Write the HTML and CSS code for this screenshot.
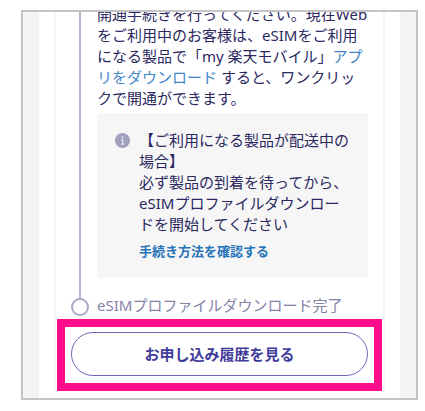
FILE: index.html
```html
<!DOCTYPE html>
<html lang="ja">
<head>
    <meta charset="UTF-8">
    <meta name="viewport" content="width=device-width, initial-scale=1.0">
    <title>お申し込み履歴</title>
    <link rel="stylesheet" href="styles.css">
</head>
<body>
    <main class="screen">
        <div class="page">
            <div class="card">
                <ol class="steps">
                    <li class="step">
                        <span class="rail"></span>
                        <div class="step-body">
                            <p class="text">開通手続きを行ってください。現在Web<br>をご利用中のお客様は、eSIMをご利用<br>になる製品で「my 楽天モバイル」<a href="#">アプ<br>リをダウンロード</a> すると、ワンクリッ<br>クで開通ができます。</p>
                            <div class="notice">
                                <svg class="info" viewBox="0 0 16 16" width="15" height="15" aria-hidden="true">
                                    <circle cx="8" cy="8" r="8" fill="#a09fbe"/>
                                    <circle cx="8" cy="4.6" r="1.1" fill="#e6e6ef"/>
                                    <path d="M6.6 7.4H8.2V11.8M6.4 11.8H9.8" fill="none" stroke="#e6e6ef" stroke-width="1.3"/>
                                </svg>
                                <div>
                                    <p class="text">【ご利用になる製品が配送中の<br>場合】<br>必ず製品の到着を待ってから、<br>eSIMプロファイルダウンロー<br>ドを開始してください</p>
                                    <a class="notice-link" href="#">手続き方法を確認する</a>
                                </div>
                            </div>
                        </div>
                    </li>
                    <li class="step">
                        <span class="dot"></span>
                        <p class="text step-done">eSIMプロファイルダウンロード完了</p>
                    </li>
                </ol>
                <div class="highlight">
                    <button type="button" class="history-button">お申し込み履歴を見る</button>
                </div>
            </div>
        </div>
    </main>
</body>
</html>
```

FILE: styles.css
```css
* {
    box-sizing: border-box;
}
body {
    margin: 0;
    padding: 10px 7px 12px 21px;
    background: #fff;
    color: #2b285f;
    font-family: "Noto Sans", "Noto Sans CJK JP", sans-serif;
    font-size: 15px;
    line-height: 21px;
}
p {
    margin: 0;
}
a {
    color: #3f86c8;
    text-decoration: none;
}
.screen {
    border: 2px solid #c4c4c4;
    padding: 0 16px;
    background: linear-gradient(to right, #f6f6f6, #f3f3f4 16px, #f3f3f4 calc(100% - 16px), #f6f6f6);
    overflow: hidden;
}
.page {
    background: #fff;
    padding: 0 15px 7px;
}
.card {
    border: solid #f4f4fa;
    border-width: 0 2px;
}
/* the list is scrolled, its first line is partly cut off */
.steps {
    list-style: none;
    margin: -8px 15px 3px;
    padding: 0;
}
.step {
    display: grid;
    grid-template-columns: 18px 1fr;
    column-gap: 8px;
    align-items: start;
}
.text {
    white-space: nowrap;
}
.rail {
    width: 2px;
    height: 100%;
    margin: 0 auto;
    background: #b4b6ce;
}
.step-body {
    padding-bottom: 20px;
    min-width: 0;
}
.notice {
    display: flex;
    gap: 9px;
    margin-top: 4px;
    padding: 17px 18px 16px;
    border-radius: 4px;
    background: #f6f6f6;
}
.info {
    flex: none;
    margin-top: 3px;
}
.notice-link {
    display: block;
    margin-top: 6px;
    color: #2673b8;
    font-size: 13px;
    font-weight: bold;
}
.dot {
    width: 18px;
    height: 18px;
    border: 2px solid #a9a8c5;
    border-radius: 50%;
}
.step-done {
    margin-top: -3px;
    color: #8583a6;
}
.highlight {
    margin: 0 1px;
    padding: 5px 6px 7px;
    border: 8px solid #ff0c8c;
}
.history-button {
    display: block;
    width: 100%;
    height: 44px;
    padding: 0;
    border: 1px solid #6f6bb8;
    border-radius: 22px;
    background: #fff;
    color: #3f3c9c;
    font: inherit;
    font-weight: bold;
    cursor: pointer;
}
```
